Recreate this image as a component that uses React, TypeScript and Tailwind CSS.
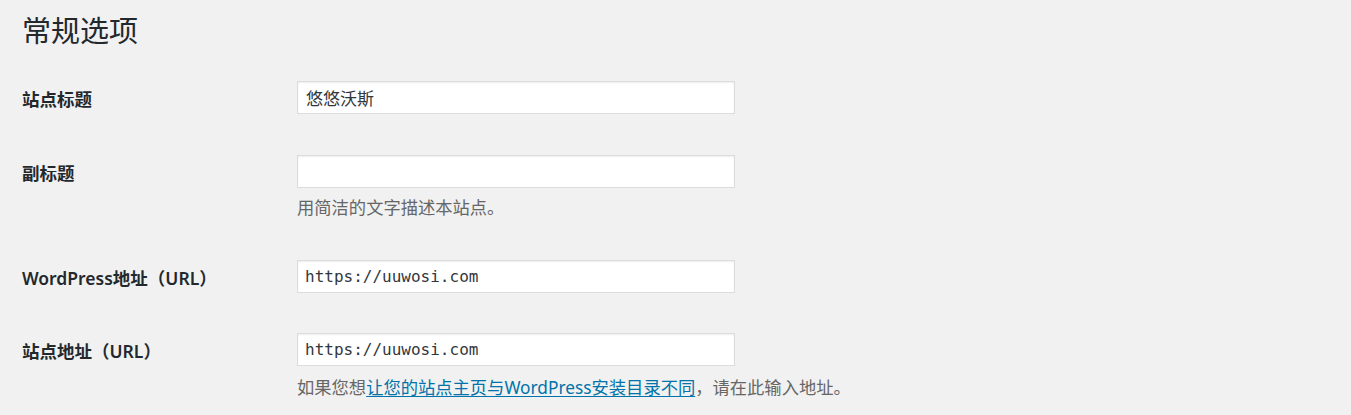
export default function App() {
  const font = "font-['Noto_Sans','Noto_Sans_CJK_SC',sans-serif]";
  const label = "w-[275px] shrink-0 pt-[6px] text-[17.5px] leading-[24px] font-semibold text-[#23282d]";
  const field =
    "w-[438px] h-[33px] bg-white border border-[#dcdcdc] shadow-[inset_0_1px_2px_rgba(0,0,0,0.07)] text-[#32373c] outline-none";
  const input = `${field} px-[8px] text-[17px]`;
  const mono = `${field} px-[7px] text-[16px] font-['DejaVu_Sans_Mono',monospace]`;
  const desc = "text-[17.3px] leading-[24px] text-[#666]";

  return (
    <div className={`min-h-screen w-full bg-[#f1f1f1] pl-[22px] ${font}`}>
      {/* Page title */}
      <h1 className="pt-[13px] text-[29px] leading-[36px] font-normal text-[#23282d]">常规选项</h1>

      <div className="mt-[32px] flex flex-col">
        {/* 站点标题 */}
        <div className="flex">
          <div className={label}>站点标题</div>
          <input className={input} defaultValue="悠悠沃斯" />
        </div>

        {/* 副标题 */}
        <div className="mt-[41px] flex">
          <div className={label}>副标题</div>
          <div className="flex flex-col">
            <input className={input} defaultValue="" />
            <p className={`mt-[8px] ${desc}`}>用简洁的文字描述本站点。</p>
          </div>
        </div>

        {/* WordPress地址 */}
        <div className="mt-[40px] flex">
          <div className={label}>WordPress地址（URL）</div>
          <input className={mono} defaultValue="https://uuwosi.com" />
        </div>

        {/* 站点地址 */}
        <div className="mt-[40px] flex">
          <div className={label}>站点地址（URL）</div>
          <div className="flex flex-col">
            <input className={mono} defaultValue="https://uuwosi.com" />
            <p className={`mt-[10px] whitespace-nowrap ${desc}`}>
              如果您想
              <a href="#" className="text-[#0073aa] underline underline-offset-2">
                让您的站点主页与WordPress安装目录不同
              </a>
              ，请在此输入地址。
            </p>
          </div>
        </div>
      </div>
    </div>
  );
}
